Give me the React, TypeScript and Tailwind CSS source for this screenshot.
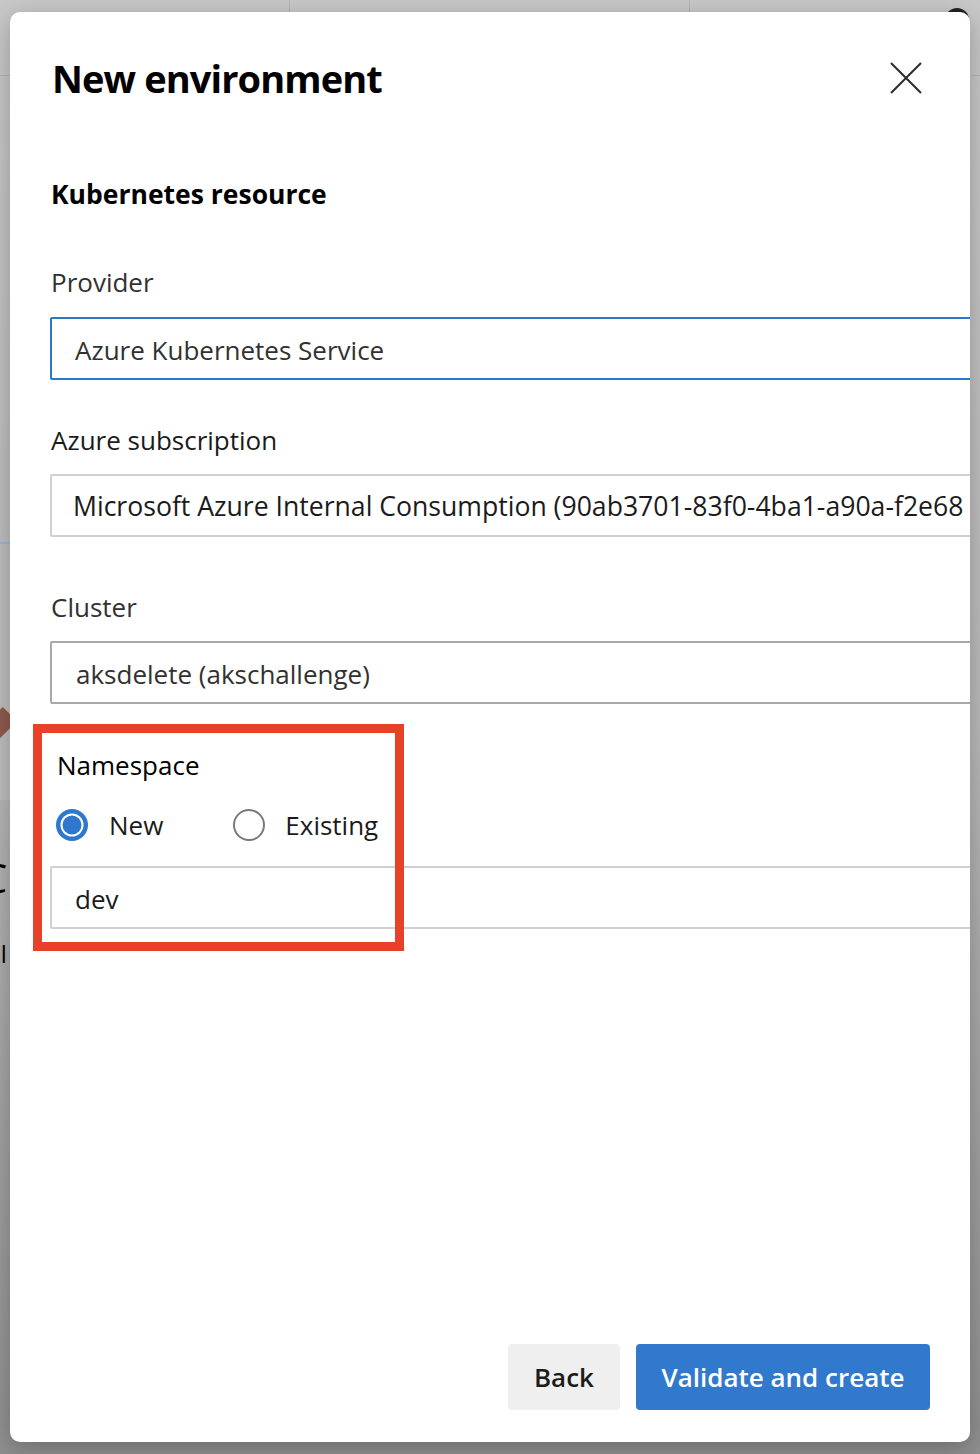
import React from 'react';

// "New environment" dialog — Kubernetes resource step, with the Namespace
// block called out in red.
const FONT = { fontFamily: '"Open Sans", "Noto Sans", sans-serif' };

const CloseIcon: React.FC = () => (
  <svg width="32" height="32" viewBox="0 0 32 32" aria-hidden="true">
    <path d="M1 1 L31 31 M31 1 L1 31" stroke="#2b2b2b" strokeWidth="2" fill="none" />
  </svg>
);

const Radio: React.FC<{ checked: boolean }> = ({ checked }) =>
  checked ? (
    <svg width="32" height="32" viewBox="0 0 32 32" aria-hidden="true">
      <circle cx="16" cy="16" r="16" fill="#2f78cd" />
      <circle cx="16" cy="16" r="10.5" fill="#2f78cd" stroke="#ffffff" strokeWidth="2" />
    </svg>
  ) : (
    <svg width="32" height="32" viewBox="0 0 32 32" aria-hidden="true">
      <circle cx="16" cy="16" r="15" fill="#ffffff" stroke="#7a7a7a" strokeWidth="2" />
    </svg>
  );

const Field: React.FC<{ value: string; border: string; text?: string; pad?: string; size?: string }> = ({
  value,
  border,
  text = 'text-[#1b1b1b]',
  pad = 'pl-[23px]',
  size = 'text-[26px]',
}) => (
  <div
    className={`h-[63px] w-[1000px] shrink-0 flex items-center pt-[3px] rounded-[2px] border-2 bg-white whitespace-nowrap ${size} ${border} ${text} ${pad}`}
  >
    {value}
  </div>
);

export default function App() {
  return (
    <div
      className="relative w-[980px] h-[1454px] overflow-hidden bg-gradient-to-b from-[#c8c8c8] via-[#b9b9b9] to-[#8f8f8f]"
      style={FONT}
    >
      {/* page behind the dialog */}
      <div className="flex h-[76px] border-b border-[#b3b3b3]">
        <div className="w-[290px] border-r border-[#b3b3b3]" />
        <div className="w-[400px] border-r border-[#b3b3b3]" />
        <div className="flex-1 flex justify-end pr-[11px] pt-[8px]">
          <div className="w-[24px] h-[24px] rounded-full bg-[#222]" />
        </div>
      </div>
      <div className="flex flex-col w-[10px] overflow-visible">
        <div className="mt-[466px] h-[2px] w-[10px] bg-[#9fb3d6]" />
        <div className="mt-[16px] h-[240px] w-[10px] bg-[#bdbdbd]" />
        <div className="-mt-[90px] h-[28px] w-[20px] -ml-[10px] rotate-45 bg-[#8e5a4c]" />
        <div className="mt-[120px] text-[40px] leading-[40px] text-black -ml-[18px]">C</div>
        <div className="mt-[44px] text-[24px] leading-[24px] text-black -ml-[14px]">ul</div>
      </div>

      {/* dialog */}
      <div className="absolute left-[10px] top-[12px] w-[960px] h-[1430px] overflow-hidden rounded-[10px] bg-white shadow-[0_6px_24px_rgba(0,0,0,0.25)] flex flex-col">
        <div className="flex items-center justify-between pl-[42px] pr-[48px] pt-[42px]">
          <h1 className="text-[38px] leading-[48px] font-bold text-black tracking-[-0.9px]">
            New environment
          </h1>
          <CloseIcon />
        </div>

        <div className="flex flex-col pl-[40px]">
          <h2 className="mt-[74px] ml-[1px] text-[26.5px] leading-[36px] font-bold text-black">
            Kubernetes resource
          </h2>

          <label className="mt-[52px] ml-[1px] text-[26px] leading-[36px] text-[#323130]">Provider</label>
          <div className="mt-[17px]">
            <Field value="Azure Kubernetes Service" border="border-[#2b78cb]" text="text-[#323130]" pad="pl-[23px]" />
          </div>

          <label className="mt-[42px] ml-[1px] text-[26px] leading-[36px] text-[#1b1b1b]">Azure subscription</label>
          <div className="mt-[16px]">
            <Field
              value="Microsoft Azure Internal Consumption (90ab3701-83f0-4ba1-a90a-f2e68"
              border="border-[#d0d0d0]"
              pad="pl-[21px]"
              size="text-[26.6px]"
            />
          </div>

          <label className="mt-[52px] ml-[1px] text-[26px] leading-[36px] text-[#323130]">Cluster</label>
          <div className="mt-[16px]">
            <Field value="aksdelete (akschallenge)" border="border-[#a9a9a9]" text="text-[#323130]" pad="pl-[24px]" />
          </div>

          <label className="mt-[43px] ml-[7px] text-[26px] leading-[36px] text-black">Namespace</label>
          <div className="mt-[24px] ml-[6px] flex items-center h-[36px]">
            <Radio checked />
            <span className="ml-[21px] text-[26px] text-[#1b1b1b]">New</span>
            <span className="ml-[70px]">
              <Radio checked={false} />
            </span>
            <span className="ml-[20px] text-[26px] text-[#1b1b1b]">Existing</span>
          </div>
          <div className="mt-[23px]">
            <Field value="dev" border="border-[#d0d0d0]" pad="pl-[23px]" />
          </div>
        </div>

        <div className="mt-auto flex justify-end gap-[16px] pr-[40px] pb-[32px]">
          <button className="h-[66px] w-[112px] rounded-[4px] bg-[#efefef] text-[26px] font-semibold text-[#1b1b1b]">
            Back
          </button>
          <button className="h-[66px] w-[294px] rounded-[4px] bg-[#3179cd] text-[26px] font-semibold text-white">
            Validate and create
          </button>
        </div>

        {/* annotation around the Namespace block */}
        <div className="absolute left-[23px] top-[712px] w-[371px] h-[227px] border-[9px] border-[#e8412a] pointer-events-none" />
      </div>
    </div>
  );
}
